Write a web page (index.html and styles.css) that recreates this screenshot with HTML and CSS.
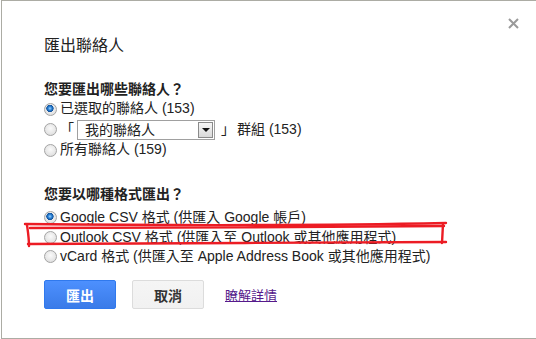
FILE: index.html
```html
<!DOCTYPE html>
<html lang="zh-Hant">
<head>
  <meta charset="UTF-8" />
  <meta name="viewport" content="width=device-width, initial-scale=1.0"/>
  <title>匯出聯絡人</title>
  <link rel="stylesheet" href="styles.css">
</head>
<body>

<div class="dialog">
  <button class="close" aria-label="關閉">
    <svg width="11" height="11" viewBox="0 0 11 11"><path d="M1 1L10 10M10 1L1 10" stroke="#9a9a9a" stroke-width="2"/></svg>
  </button>

  <h1 class="title">匯出聯絡人</h1>

  <div class="group group-who">
    <h2>您要匯出哪些聯絡人？</h2>
    <label class="opt"><input type="radio" name="who" checked>已選取的聯絡人 (153)</label>
    <label class="opt opt-group">
      <input type="radio" name="who">
      <span class="br br-open">「</span>
      <span class="select-wrap">
        <select><option>我的聯絡人</option></select>
        <span class="arrow"></span>
      </span>
      <span class="br br-close">」</span>
      <span>群組 (153)</span>
    </label>
    <label class="opt"><input type="radio" name="who">所有聯絡人 (159)</label>
  </div>

  <div class="group group-format">
    <h2>您要以哪種格式匯出？</h2>
    <label class="opt"><input type="radio" name="format" checked>Google CSV 格式 (供匯入 Google 帳戶)</label>
    <label class="opt"><input type="radio" name="format">Outlook CSV 格式 (供匯入至 Outlook 或其他應用程式)</label>
    <label class="opt"><input type="radio" name="format">vCard 格式 (供匯入至 Apple Address Book 或其他應用程式)</label>
  </div>

  <div class="actions">
    <button class="btn btn-primary">匯出</button>
    <button class="btn">取消</button>
    <a href="#" class="more">瞭解詳情</a>
  </div>

  <!-- red marker drawn over the Outlook row -->
  <svg class="scribble" width="536" height="339" viewBox="0 0 536 339">
    <g fill="none" stroke="#ec1c24" stroke-width="2.4" stroke-linecap="round">
      <path d="M25 224 C120 225 300 226 446 223"/>
      <path d="M30 228 C150 228 320 227 444 226"/>
      <path d="M443 224 L442 243"/>
      <path d="M27 225 C28 232 29 238 29 246"/>
      <path d="M28 244 C150 243 320 243 446 242"/>
    </g>
  </svg>
</div>

</body>
</html>
```

FILE: styles.css
```css
html, body {
  margin: 0;
  background: #fff;
  overflow: hidden;
}

body {
  font-family: 'Liberation Sans', 'Noto Sans CJK TC', sans-serif;
  color: #222;
}

.dialog {
  position: relative;
  box-sizing: border-box;
  height: 339px;
  margin-left: 1px;
  padding: 35px 0 0 42px;
  border-top: 1px solid #acaca4;
  border-left: 1px solid #acaca4;
  border-bottom: 1px solid #acaca4;
}

.close {
  position: absolute;
  top: 17px;
  right: 17px;
  padding: 0;
  border: none;
  background: none;
  cursor: pointer;
  line-height: 0;
}

.title {
  margin: 0;
  font-size: 16px;
  font-weight: normal;
  line-height: 20px;
  color: #222;
}

.group h2 {
  margin: 0;
  font-size: 14px;
  font-weight: bold;
  line-height: 20px;
  color: #222;
}

.group-who { margin-top: 23px; }
.group-format { margin-top: 24px; }
.group-format h2 { margin-bottom: 4px; }

.opt {
  display: flex;
  align-items: center;
  font-size: 14px;
  line-height: 19.5px;
  height: 19.5px;
  white-space: nowrap;
  color: #222;
}

.group-who .opt { height: 20px; }
.group-who .opt-group { height: 21px; }

.opt input {
  appearance: none;
  -webkit-appearance: none;
  box-sizing: border-box;
  width: 13px;
  height: 13px;
  margin: 0 3px 0 0;
  border: 1px solid #a4a4a4;
  border-radius: 50%;
  background: radial-gradient(circle at 50% 40%, #fafafa 0%, #e6e6e6 60%, #d4d4d4 100%);
  flex-shrink: 0;
}

.opt input:checked {
  background:
    radial-gradient(circle at 45% 40%, #9fd3ff 0, #2f86d8 1.8px, #0e4f9a 3.4px, transparent 3.9px),
    radial-gradient(circle at 50% 40%, #fafafa 0%, #e6e6e6 60%, #d4d4d4 100%);
}

.br {
  display: inline-block;
  width: 14px;
  text-align: center;
}

.br-open { margin-right: 3px; }
.br-close { margin-left: 6px; margin-right: 2px; }

.select-wrap {
  position: relative;
  display: inline-block;
  height: 20px;
}

.select-wrap select {
  appearance: none;
  -webkit-appearance: none;
  box-sizing: border-box;
  width: 138px;
  height: 20px;
  margin: 0;
  padding: 0 0 0 7px;
  border: 1px solid #a0a0a0;
  border-radius: 0;
  background: #fff;
  font-family: inherit;
  font-size: 14px;
  color: #222;
}

.arrow {
  position: absolute;
  top: 2px;
  right: 2px;
  box-sizing: border-box;
  width: 15px;
  height: 16px;
  border: 1px solid #8a8a8a;
  background: linear-gradient(#f6f6f6, #d9d9d9);
  pointer-events: none;
}

.arrow::after {
  content: '';
  position: absolute;
  left: 3px;
  top: 5px;
  border-left: 4px solid transparent;
  border-right: 4px solid transparent;
  border-top: 4px solid #111;
}

.actions {
  display: flex;
  align-items: center;
  margin-top: 13.5px;
}

.btn {
  box-sizing: border-box;
  width: 72px;
  height: 29px;
  margin-right: 16px;
  padding: 0;
  border: 1px solid #dcdcdc;
  border-radius: 2px;
  background: linear-gradient(#f5f5f5, #f1f1f1);
  font-family: inherit;
  font-size: 14px;
  font-weight: bold;
  color: #333;
  cursor: pointer;
}

.btn-primary {
  border-color: #3079ed;
  background: linear-gradient(#4d90fe, #3a7be8);
  color: #fff;
}

.more {
  margin-left: 5px;
  font-size: 13px;
  color: #551a8b;
}

.scribble {
  position: absolute;
  top: -1px;
  left: -2px;
  pointer-events: none;
}
```
